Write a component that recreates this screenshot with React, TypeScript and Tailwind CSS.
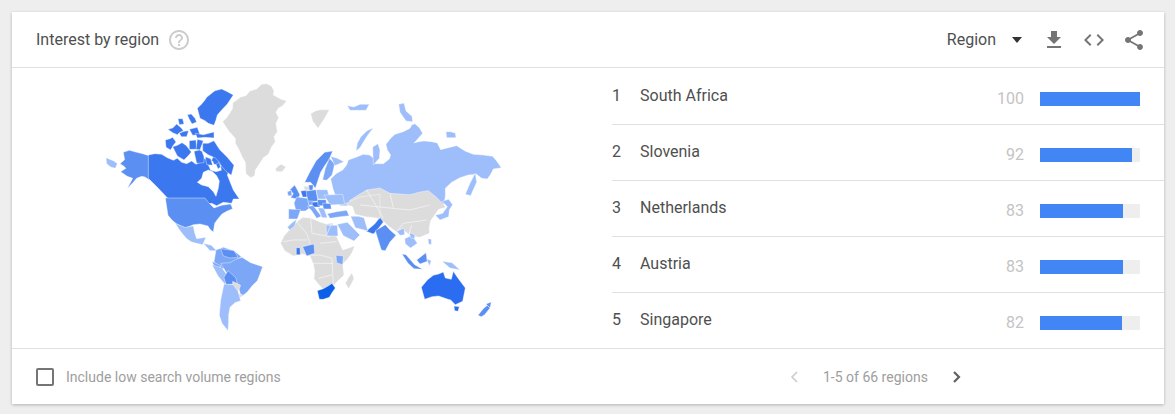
import React from "react";

const C = {
  gray: "#dcdcdc",
  light: "#9dbefa",
  mid: "#7ca6f6",
  strong: "#5c8ff2",
  deep: "#3b78ef",
  top: "#2a6df0",
  max: "#0b5fe8",
  sea: "#ffffff",
};

type Shape = [string, string];

// traced from the reference, coordinates are 3x page px inside each group
const alaskaGreenland: Shape[] = [
  [C.gray, "515,28 530,26 545,34 552,48 550,60 572,72 590,78 578,92 565,100 558,112 566,128 558,145 562,170 552,185 556,200 545,215 535,238 520,248 508,268 496,285 494,302 482,308 468,296 466,262 456,245 448,226 436,205 436,190 416,168 398,140 410,128 418,116 428,100 428,84 452,66 468,62 480,48 500,42"],
  [C.gray, "556,282 566,272 574,268 588,276 576,290 560,290"],
  [C.light, "48,248 62,254 72,258 82,266 76,280 62,276 50,266"],
  [C.strong, "100,232 118,226 140,232 158,236 177,242 177,314 165,306 155,304 140,310 128,324 112,340 122,322 128,310 112,304 106,300 92,290 108,280 100,272 90,266 104,254"],
  [C.deep, "175,240 195,236 215,238 232,248 250,256 262,250 275,262 290,266 305,258 318,268 330,262 338,250 350,252 352,268 362,262 372,240 385,248 395,250 405,262 420,268 418,285 412,300 420,320 430,345 448,372 430,372 425,385 400,382 380,392 365,385 345,388 330,372 235,372 222,358 205,340 175,310"],
  [C.sea, "322,322 335,310 340,292 355,285 368,290 380,302 388,318 385,340 378,364 370,350 355,335 335,330"],
  [C.sea, "352,262 368,258 372,268 392,270 394,286 378,290 362,286"],
  [C.deep, "378,268 386,262 392,276 384,282"],
];

// arctic islands, group origin 140,100
const arctic: Shape[] = [
  [C.deep, "280,-15 262,-25 245,-33 225,-28 215,-20 200,-8 195,0 185,12 172,25 176,40 180,55 195,62 205,70 222,76 228,60 232,45 245,30 262,12"],
  [C.deep, "142,44 154,42 165,55 170,66 156,72 148,58"],
  [C.deep, "114,56 128,56 132,72 118,74"],
  [C.deep, "84,88 98,84 110,72 124,84 130,92 118,98 112,104 98,98"],
  [C.deep, "118,100 132,94 146,92 140,110 124,110"],
  [C.deep, "148,88 172,82 180,104 158,106"],
  [C.deep, "166,100 190,104 222,96 222,114 196,112 172,114"],
  [C.deep, "76,120 90,116 98,112 108,126 100,136 92,150 78,142"],
  [C.deep, "98,140 112,136 126,128 138,136 154,156 146,166 132,180 112,168"],
  [C.deep, "148,122 168,120 170,148 148,148"],
  [C.deep, "172,118 190,122 180,150 168,148"],
  [C.deep, "188,130 205,130 222,122 232,138 240,150 262,172 282,196 274,226 258,214 246,200 236,184 226,174 204,164 188,152"],
  [C.deep, "162,154 178,150 186,154 192,170 192,188 170,190"],
  [C.deep, "196,170 212,176 218,196 200,194"],
];

const russia: Shape[] = [
  [C.light, "92,312 108,296 128,285 140,270 145,255 170,246 190,238 208,240 222,250 226,266 250,266 268,252 272,240 262,225 258,208 272,190 285,178 310,170 330,160 335,150 345,146 358,158 368,175 355,190 342,204 356,200 372,198 395,200 412,204 422,224 445,218 470,212 495,228 520,238 550,240 578,244 590,258 604,278 580,282 572,298 562,312 545,310 530,298 505,300 480,308 455,322 436,340 436,365 430,392 330,392 200,392 120,392 108,365 100,345"],
  [C.light, "168,228 172,205 182,186 200,168 220,158 202,182 180,218"],
  [C.light, "218,216 234,206 240,225 238,250 220,270"],
  [C.light, "296,88 312,84 318,108 336,124 338,140 318,138 300,112"],
  [C.light, "438,170 452,170 466,174 468,188 440,188"],
  [C.light, "496,358 510,325 526,294 530,322 512,362"],
  [C.light, "142,92 162,96 180,88 208,88 198,106 150,106"],
  [C.gray, "32,116 46,108 60,104 88,104 74,130 54,160 38,138"],
  [C.strong, "14,322 30,290 48,258 62,244 74,232 98,228 88,252 74,272 62,292 46,340 32,322"],
  [C.mid, "68,314 76,280 88,250 104,266 100,285 96,300 80,316"],
  [C.light, "92,244 112,250 132,260 104,272"],
];

const america: Shape[] = [
  [C.strong, "46,-6 165,-6 176,8 192,24 215,16 242,12 248,26 230,34 216,42 204,56 194,70 190,96 180,88 174,78 150,72 130,74 116,80 105,84 92,78 80,72 66,60 54,46"],
  [C.light, "76,70 105,82 130,78 134,98 140,116 168,112 158,134 140,130 125,126 110,116 98,102 86,86"],
  [C.light, "160,130 184,136 200,152 180,152"],
  [C.mid, "198,150 220,142 252,152 274,170 240,192 216,208 192,186"],
  [C.strong, "212,146 252,152 264,172 240,174 220,168"],
  [C.mid, "212,190 240,188 258,178 276,172 302,188 338,200 330,222 322,242 306,258 292,276 274,290 262,252 248,236 228,216"],
  [C.mid, "186,184 214,198 196,208"],
  [C.light, "186,194 216,204 232,226 226,254 204,228"],
  [C.strong, "222,232 234,212 258,234 262,252 228,254"],
  [C.gray, "248,244 272,256 264,276 248,264"],
  [C.gray, "262,280 278,284 268,296"],
  [C.light, "222,252 250,254 264,274 272,302 255,308 240,322 236,345 236,365 234,392 216,370 208,346 212,300"],
];

const africa: Shape[] = [
  [C.gray, "392,130 402,108 420,88 440,66 458,52 482,54 510,66 530,72 548,68 554,90 560,110 570,132 578,150 614,138 606,158 594,176 578,192 582,226 566,240 552,256 535,264 520,268 505,252 492,236 494,212 490,192 480,168 456,162 430,168 404,152"],
  [C.light, "528,76 562,76 564,108 530,108"],
  [C.light, "412,82 426,68 440,58 434,78 420,90"],
  [C.strong, "458,140 492,132 494,160 470,168"],
  [C.deep, "439,143 450,143 451,164 439,164"],
  [C.mid, "558,166 580,168 578,194 560,188"],
  [C.max, "502,272 520,266 538,256 546,250 556,264 546,278 538,292 520,298 508,298"],
  [C.gray, "586,250 596,232 606,218 612,236 604,252 596,266"],
];

// origin 280,175
const europe: Shape[] = [
  [C.gray, "70,35 100,32 100,45 75,45"],
  [C.strong, "30,44 44,30 52,44 60,60 52,72 32,68 40,56"],
  [C.mid, "22,50 34,46 36,62 24,62"],
  [C.strong, "86,30 100,30 98,46 88,46"],
  [C.deep, "62,48 80,46 82,66 68,66"],
  [C.strong, "78,48 108,44 114,78 84,82"],
  [C.light, "108,44 142,44 150,72 114,72"],
  [C.mid, "50,66 82,70 90,98 76,108 48,108 42,84"],
  [C.mid, "26,102 62,104 52,132 26,132"],
  [C.light, "132,60 188,58 194,88 150,90"],
  [C.mid, "84,78 100,78 100,90 86,90"],
  [C.deep, "96,82 118,80 120,96 98,96"],
  [C.strong, "112,74 138,74 140,92 114,92"],
  [C.mid, "82,94 100,92 124,124 110,130 94,106"],
  [C.strong, "128,84 152,86 154,102 130,102"],
  [C.light, "114,98 132,100 142,128 126,128"],
  [C.mid, "142,116 170,110 200,106 208,122 175,126 150,130"],
  [C.gray, "196,86 240,66 300,58 300,130 260,126 225,118 218,96"],
  [C.sea, "202,92 216,94 218,124 206,118"],
  [C.light, "212,124 235,124 252,128 264,168 226,158"],
  [C.light, "172,148 202,142 220,160 240,180 222,198 190,182"],
];

const asia: Shape[] = [
  [C.gray, "28,2 50,-12 80,-30 120,-36 150,-20 210,-16 240,-24 265,-28 285,-12 300,2 318,22 296,28 282,48 272,62 268,82 268,100 240,112 212,108 186,86 170,96 150,82 132,66 110,54 78,40 50,20"],
  [C.deep, "78,94 104,72 120,52 130,66 110,92 100,102"],
  [C.strong, "106,92 136,74 150,90 168,106 150,126 136,152 124,150"],
  [C.light, "170,94 192,84 194,104 180,106"],
  [C.light, "194,116 216,106 232,130 212,144 196,132"],
  [C.light, "208,98 224,104 224,116 212,114"],
  [C.strong, "186,162 198,164 224,194 248,208 222,206 204,190"],
  [C.strong, "230,180 258,158 262,184 240,192"],
  [C.light, "264,116 274,118 274,134 266,132"],
  [C.light, "260,176 274,182 268,198"],
  [C.light, "306,184 336,188 360,210 330,204"],
  [C.light, "286,46 300,60 326,50 328,30 338,14 326,-2 306,4 322,20 308,40"],
  [C.top, "244,262 262,240 280,226 296,222 310,216 316,234 334,238 340,214 352,232 376,264 368,304 346,314 332,300 324,298 296,288 276,290 254,298"],
  [C.top, "342,318 358,320 354,334 344,332"],
  [C.strong, "414,346 430,326 442,316 450,324 434,344 424,350"],
  [C.strong, "438,312 454,306 450,324"],
];

// thin country borders across the grey land
const borders: [number, number, string][] = [
  [150, 200, "440,66 470,100 480,130 M482,54 486,100 540,110 M545,70 530,105 M480,166 510,165 546,175 M490,190 550,190 M546,175 550,255 M505,235 546,225 M430,120 470,120 M400,125 430,120 M510,130 560,125"],
  [340, 200, "80,-30 110,20 130,55 M110,20 210,30 270,15 M60,15 110,20 M170,95 190,70 260,60 M205,110 215,75 M150,-20 160,22"],
];

const Land = ({ shapes, x, y }: { shapes: Shape[]; x: number; y: number }) => (
  <g transform={`translate(${x} ${y}) scale(0.3333)`} stroke="#ffffff" strokeWidth="1.2" strokeLinejoin="round">
    {shapes.map(([fill, points], i) => (
      <polygon key={i} fill={fill} points={points} />
    ))}
  </g>
);

const WorldMap = () => (
  <svg viewBox="100 75 410 260" className="w-[410px] h-[260px] block blur-[0.3px]">
    <Land shapes={russia} x={300} y={75} />
    <Land shapes={alaskaGreenland} x={90} y={75} />
    <Land shapes={arctic} x={140} y={100} />
    <Land shapes={asia} x={340} y={200} />
    <Land shapes={africa} x={150} y={200} />
    <Land shapes={europe} x={280} y={175} />
    <Land shapes={america} x={150} y={200} />
    {borders.map(([x, y, d]) => (
      <path
        key={x}
        transform={`translate(${x} ${y}) scale(0.3333)`}
        d={"M" + d.replace(/ M/g, "M").replace(/,/g, " ")}
        fill="none"
        stroke="#ffffff"
        strokeWidth="1.6"
      />
    ))}
  </svg>
);

const rows = [
  { rank: 1, name: "South Africa", value: 100 },
  { rank: 2, name: "Slovenia", value: 92 },
  { rank: 3, name: "Netherlands", value: 83 },
  { rank: 4, name: "Austria", value: 83 },
  { rank: 5, name: "Singapore", value: 82 },
];

const Icon = ({ d, className }: { d: string; className: string }) => (
  <svg viewBox="0 0 24 24" className={className} fill="currentColor">
    <path d={d} />
  </svg>
);

export default function App() {
  return (
    <div className="w-[1175px] h-[414px] bg-[#eeeeee] p-3 font-['Roboto',sans-serif]">
      <div className="w-[1152px] h-[392px] bg-white shadow-[0_1px_3px_rgba(0,0,0,0.25)] flex flex-col">
        <div className="h-14 shrink-0 border-b border-[#e0e0e0] flex items-center pl-6 pr-[18px]">
          <span className="text-base text-[#4f4f4f]">Interest by region</span>
          <Icon
            className="w-6 h-6 ml-2 text-[#cccccc]"
            d="M11 18h2v-2h-2v2zm1-16C6.48 2 2 6.48 2 12s4.48 10 10 10 10-4.48 10-10S17.52 2 12 2zm0 18c-4.41 0-8-3.59-8-8s3.59-8 8-8 8 3.59 8 8-3.59 8-8 8zm0-14c-2.21 0-4 1.79-4 4h2c0-1.1.9-2 2-2s2 .9 2 2c0 2-3 1.75-3 5h2c0-2.25 3-2.5 3-5 0-2.21-1.79-4-4-4z"
          />
          <span className="ml-auto text-base text-[#4f4f4f]">Region</span>
          <span className="ml-4 w-0 h-0 border-x-[5.5px] border-x-transparent border-t-[6px] border-t-[#333333]" />
          <div className="flex items-center gap-4 ml-5 text-[#757575]">
            <Icon className="w-6 h-6" d="M19 9h-4V3H9v6H5l7 7 7-7zM5 18v2h14v-2H5z" />
            <Icon
              className="w-6 h-6"
              d="M9.4 16.6L4.8 12l4.6-4.6L8 6l-6 6 6 6 1.4-1.4zm5.2 0l4.6-4.6-4.6-4.6L16 6l6 6-6 6-1.4-1.4z"
            />
            <Icon
              className="w-6 h-6"
              d="M18 16.08c-.76 0-1.44.3-1.96.77L8.91 12.7c.05-.23.09-.46.09-.7s-.04-.47-.09-.7l7.05-4.11c.54.5 1.25.81 2.04.81 1.66 0 3-1.34 3-3s-1.34-3-3-3-3 1.34-3 3c0 .24.04.47.09.7L8.04 9.81C7.5 9.31 6.79 9 6 9c-1.66 0-3 1.34-3 3s1.34 3 3 3c.79 0 1.5-.31 2.04-.81l7.12 4.16c-.05.21-.08.43-.08.65 0 1.61 1.31 2.92 2.92 2.92 1.61 0 2.92-1.31 2.92-2.92s-1.31-2.92-2.92-2.92z"
            />
          </div>
        </div>

        <div className="flex flex-1 min-h-0">
          <div className="w-[600px] shrink-0 pl-[88px] pt-[7px]">
            <WorldMap />
          </div>
          <div className="flex-1 flex flex-col pt-px">
            {rows.map((row, i) => (
              <div
                key={row.rank}
                className={`h-14 shrink-0 flex items-start pr-6 ${i < rows.length - 1 ? "border-b border-[#e0e0e0]" : ""}`}
              >
                <span className="w-[28px] mt-[17px] text-base leading-5 text-[#4f4f4f]">{row.rank}</span>
                <span className="mt-[17px] text-base leading-5 text-[#4f4f4f]">{row.name}</span>
                <span className="ml-auto mt-5 text-base leading-5 text-[#c4c4c4]">{row.value}</span>
                <div className="ml-4 mt-[23px] w-[100px] h-[14px] bg-[#eeeeee]">
                  <div className="h-full bg-[#4285f4]" style={{ width: `${row.value}%` }} />
                </div>
              </div>
            ))}
          </div>
        </div>

        <div className="h-14 shrink-0 border-t border-[#e0e0e0] flex items-center">
          <div className="w-[600px] shrink-0 flex items-center pl-6">
            <span className="w-[18px] h-[18px] border-2 border-[#757575] rounded-[2px]" />
            <span className="ml-3 text-sm text-[#9e9e9e]">Include low search volume regions</span>
          </div>
          <div className="flex items-center">
            <svg viewBox="0 0 10 12" className="w-[10px] h-3 ml-[177px] text-[#cccccc]" fill="none" stroke="currentColor" strokeWidth="1.6">
              <path d="M8 1L3 6l5 5" />
            </svg>
            <span className="ml-6 text-sm text-[#9e9e9e]">1-5 of 66 regions</span>
            <svg viewBox="0 0 10 12" className="w-[10px] h-3 ml-6 text-[#616161]" fill="none" stroke="currentColor" strokeWidth="2.2">
              <path d="M2 1l5 5-5 5" />
            </svg>
          </div>
        </div>
      </div>
    </div>
  );
}
